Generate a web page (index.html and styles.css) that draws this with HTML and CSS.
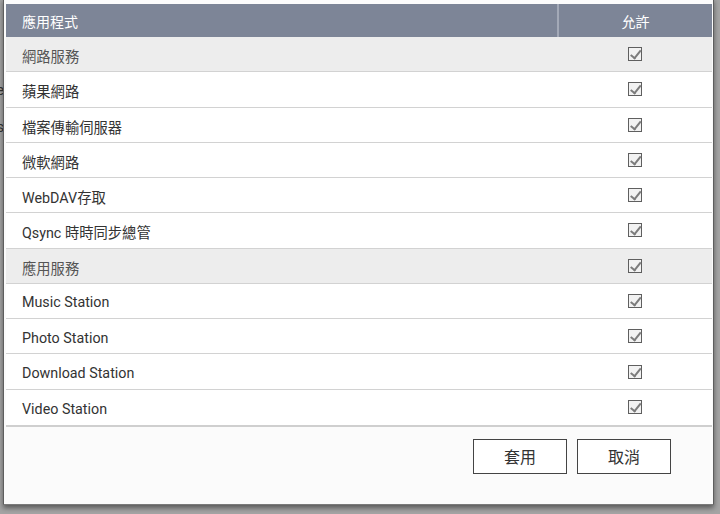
FILE: index.html
```html
<!DOCTYPE html>
<html lang="zh-Hant">
<head>
    <meta charset="UTF-8">
    <meta name="viewport" content="width=device-width, initial-scale=1.0">
    <title>應用程式權限</title>
    <link rel="stylesheet" href="styles.css">
</head>
<body>
    <div class="page-behind">
        <div class="behind-line line-a">Storage</div>
        <div class="behind-line line-b">Services</div>
    </div>

    <div class="dialog">
        <div class="perm-table">
            <div class="perm-head">
                <div class="col-name">應用程式</div>
                <div class="col-allow">允許</div>
            </div>
            <div class="perm-row group"><div class="col-name">網路服務</div><div class="col-allow"><span class="check"></span></div></div>
            <div class="perm-row"><div class="col-name">蘋果網路</div><div class="col-allow"><span class="check"></span></div></div>
            <div class="perm-row"><div class="col-name">檔案傳輸伺服器</div><div class="col-allow"><span class="check"></span></div></div>
            <div class="perm-row"><div class="col-name">微軟網路</div><div class="col-allow"><span class="check"></span></div></div>
            <div class="perm-row"><div class="col-name">WebDAV存取</div><div class="col-allow"><span class="check"></span></div></div>
            <div class="perm-row"><div class="col-name">Qsync 時時同步總管</div><div class="col-allow"><span class="check"></span></div></div>
            <div class="perm-row group"><div class="col-name">應用服務</div><div class="col-allow"><span class="check"></span></div></div>
            <div class="perm-row"><div class="col-name">Music Station</div><div class="col-allow"><span class="check"></span></div></div>
            <div class="perm-row"><div class="col-name">Photo Station</div><div class="col-allow"><span class="check"></span></div></div>
            <div class="perm-row"><div class="col-name">Download Station</div><div class="col-allow"><span class="check"></span></div></div>
            <div class="perm-row"><div class="col-name">Video Station</div><div class="col-allow"><span class="check"></span></div></div>
        </div>
        <div class="dialog-footer">
            <button class="btn">套用</button>
            <button class="btn">取消</button>
        </div>
    </div>
</body>
</html>
```

FILE: styles.css
```css
body {
    margin: 0;
    height: 514px;
    overflow: hidden;
    background-color: #a4a4a4;
    font-family: Roboto, "Noto Sans CJK TC", sans-serif;
    position: relative;
}
.page-behind {
    position: absolute;
    left: 0;
    top: 0;
    width: 720px;
}
.behind-line {
    position: absolute;
    right: 716px;
    font-size: 14px;
    color: #333;
    white-space: nowrap;
}
.line-a {
    top: 82px;
}
.line-b {
    top: 119px;
}
.dialog {
    position: absolute;
    left: 3px;
    top: -2px;
    width: 711px;
    height: 507px;
    background-color: #fbfbfb;
    border-left: 1px solid #5e5e5e;
    border-right: 1px solid #5e5e5e;
    border-bottom: 1px solid #7a7a7a;
    box-shadow: 0 3px 5px rgba(0, 0, 0, 0.45);
    padding: 6px 1px 0 2px;
    box-sizing: border-box;
}
.perm-table {
    border-bottom: 2px solid #cfcfcf;
}
.perm-head,
.perm-row {
    display: grid;
    grid-template-columns: 553px 1fr;
    align-items: center;
}
.perm-head {
    height: 33px;
    background-color: #7d8597;
    color: #fff;
    font-size: 14px;
}
.perm-head .col-name {
    height: 100%;
    display: flex;
    align-items: center;
    border-right: 2px solid #a3a9b7;
}
.col-name {
    padding-left: 16px;
}
.perm-row .col-name {
    padding-top: 3px;
}
.col-allow {
    text-align: center;
    display: flex;
    justify-content: center;
    align-items: center;
}
.perm-row {
    height: 35.27px;
    box-sizing: border-box;
    border-bottom: 1px solid #d2d2d2;
    background-color: #fff;
    color: #333;
    font-size: 14.3px;
}
.perm-row:last-child {
    border-bottom: none;
}
.perm-row.group {
    background-color: #ededed;
    color: #555;
}
.check {
    width: 12px;
    height: 12px;
    border: 1px solid #5f5f5f;
    background-color: #f2f2f2;
    position: relative;
    margin-left: -1px;
}
.check::after {
    content: "";
    position: absolute;
    left: 3px;
    top: 0;
    width: 4px;
    height: 9px;
    border-right: 2px solid #7c7c7c;
    border-bottom: 2px solid #7c7c7c;
    transform: rotate(38deg);
    transform-origin: 60% 60%;
}
.dialog-footer {
    display: flex;
    justify-content: flex-end;
    gap: 10px;
    padding: 12px 41px 0 0;
}
.btn {
    width: 94px;
    height: 35px;
    background-color: #fff;
    border: 1px solid #444;
    font-family: Roboto, "Noto Sans CJK TC", sans-serif;
    font-size: 16px;
    color: #333;
    padding: 0;
}
```
